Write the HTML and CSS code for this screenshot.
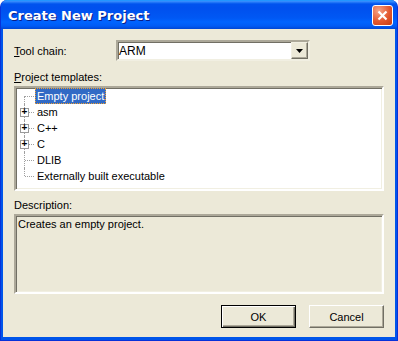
FILE: index.html
```html
<!DOCTYPE html>
<html lang="en">
<head>
    <meta charset="UTF-8">
    <title>Create New Project</title>
    <link rel="stylesheet" href="styles.css">
</head>
<body>
    <div class="window">
        <div class="titlebar">
            <span class="title">Create New Project</span>
            <button class="close" title="Close">
                <svg width="11" height="11" viewBox="0 0 11 11">
                    <path d="M1.5 1.5 L9.5 9.5 M9.5 1.5 L1.5 9.5" stroke="#fff" stroke-width="2.2" fill="none"/>
                </svg>
            </button>
        </div>
        <div class="dialog">
            <!-- Tool chain selector -->
            <div class="field-row">
                <label class="field-label"><u>T</u>ool chain:</label>
                <div class="combo">
                    <span class="combo-value">ARM</span>
                    <span class="combo-drop">
                        <svg width="7" height="4" viewBox="0 0 7 4"><path d="M0 0 H7 L3.5 4 Z" fill="#000"/></svg>
                    </span>
                </div>
            </div>

            <div class="caption"><u>P</u>roject templates:</div>
            <div class="tree">
                <div class="tree-row first">
                    <span class="twig"></span>
                    <span class="item selected">Empty project</span>
                </div>
                <div class="tree-row">
                    <span class="twig"><span class="plus">+</span></span>
                    <span class="item">asm</span>
                </div>
                <div class="tree-row">
                    <span class="twig"><span class="plus">+</span></span>
                    <span class="item">C++</span>
                </div>
                <div class="tree-row">
                    <span class="twig"><span class="plus">+</span></span>
                    <span class="item">C</span>
                </div>
                <div class="tree-row">
                    <span class="twig"></span>
                    <span class="item">DLIB</span>
                </div>
                <div class="tree-row last">
                    <span class="twig"></span>
                    <span class="item">Externally built executable</span>
                </div>
            </div>

            <div class="caption desc-caption">Description:</div>
            <div class="desc">Creates an empty project.</div>

            <div class="buttons">
                <button class="btn default">OK</button>
                <button class="btn">Cancel</button>
            </div>
        </div>
    </div>
</body>
</html>
```

FILE: styles.css
```css
body {
    margin: 0;
    background: #fff;
    font-family: "Liberation Sans", Arial, sans-serif;
    font-size: 11px;
    color: #000;
}
.window {
    width: 398px;
    height: 341px;
    box-sizing: border-box;
    display: flex;
    flex-direction: column;
    background: #0055ea;
    border-radius: 7px 7px 0 0;
    border: 1px solid #0831d9;
    border-top: none;
    overflow: hidden;
}
.titlebar {
    height: 29px;
    flex: none;
    display: flex;
    align-items: center;
    justify-content: space-between;
    padding: 0 4px 0 7px;
    background: linear-gradient(to bottom, #0997ff 0, #3d95ff 1px, #0053ee 4px, #0050ee 8px, #0058f4 18px, #0064ff 22px, #005bf5 26px, #0046d3 29px);
    box-sizing: border-box;
}
.title {
    color: #fff;
    font-weight: bold;
    font-size: 13px;
    font-family: "DejaVu Sans", sans-serif;
    text-shadow: 1px 1px 0 #0a1e88;
    padding-top: 1px;
}
.close {
    width: 21px;
    height: 21px;
    padding: 0;
    border: 1px solid #fff;
    border-radius: 3px;
    background: radial-gradient(circle at 30% 25%, #f5a488 0, #e3582f 55%, #c63b12 100%);
    display: flex;
    align-items: center;
    justify-content: center;
    margin-top: 1px;
}
.dialog {
    flex: 1;
    margin: 0 2px 3px 2px;
    background: #ece9d8;
    padding: 11px 11px 0 11px;
    display: flex;
    flex-direction: column;
}
.field-row {
    display: flex;
    align-items: center;
    height: 21px;
}
.field-label {
    width: 102px;
}
.combo {
    width: 194px;
    height: 21px;
    box-sizing: border-box;
    border: 2px solid;
    border-color: #aca899 #f1efe2 #f1efe2 #aca899;
    box-shadow: inset 1px 1px 0 #716f64;
    background: #fff;
    display: flex;
    align-items: center;
    justify-content: space-between;
}
.combo-value {
    padding-left: 1px;
    font-size: 12px;
}
.combo-drop {
    width: 17px;
    height: 17px;
    box-sizing: border-box;
    border: 1px solid;
    border-color: #f1efe2 #716f64 #716f64 #f1efe2;
    box-shadow: inset -1px -1px 0 #aca899;
    background: #ece9d8;
    display: flex;
    align-items: center;
    justify-content: center;
}
.caption {
    height: 14px;
    line-height: 14px;
    margin: 9px 0 2px 0;
}
.desc-caption {
    margin-top: 7px;
}
.tree, .desc {
    width: 370px;
    box-sizing: border-box;
    border: 2px solid;
    border-color: #aca899 #fff #fff #aca899;
    box-shadow: inset 1px 1px 0 #716f64, inset -1px -1px 0 #f1efe2;
}
.tree {
    height: 105px;
    background: #fff;
    padding-left: 3px;
}
.tree-row {
    display: flex;
    align-items: center;
    height: 16px;
}
.twig {
    position: relative;
    width: 16px;
    height: 16px;
    flex: none;
}
.twig::before {
    content: "";
    position: absolute;
    left: 5px;
    top: 0;
    bottom: 0;
    border-left: 1px dotted #a0a0a0;
}
.twig::after {
    content: "";
    position: absolute;
    left: 6px;
    right: 1px;
    top: 8px;
    border-top: 1px dotted #a0a0a0;
}
.first .twig::before {
    top: 8px;
}
.last .twig::before {
    bottom: 8px;
}
.plus {
    position: absolute;
    left: 1px;
    top: 4px;
    width: 9px;
    height: 9px;
    box-sizing: border-box;
    border: 1px solid #9a9a9a;
    background: #fff;
    font-size: 10px;
    line-height: 6px;
    text-align: center;
    font-weight: bold;
    z-index: 1;
}
.item {
    padding: 0 1px;
    height: 14px;
    line-height: 14px;
    border: 1px solid transparent;
    white-space: nowrap;
}
.item.selected {
    background: #316ac5;
    color: #fff;
    border: 1px dotted #f0a030;
}
.desc {
    height: 80px;
    background: #ece9d8;
    padding: 1px 2px;
    line-height: 14px;
}
.buttons {
    display: flex;
    justify-content: flex-end;
    gap: 13px;
    margin-top: 11px;
}
.btn {
    width: 75px;
    height: 23px;
    box-sizing: border-box;
    font-family: inherit;
    font-size: 11px;
    background: #ece9d8;
    border: 1px solid;
    border-color: #fff #716f64 #716f64 #fff;
    box-shadow: inset -1px -1px 0 #aca899;
    padding: 0;
}
.btn.default {
    border: 1px solid #000;
    box-shadow: inset 1px 1px 0 #fff, inset -1px -1px 0 #716f64, inset -2px -2px 0 #aca899;
}
```
